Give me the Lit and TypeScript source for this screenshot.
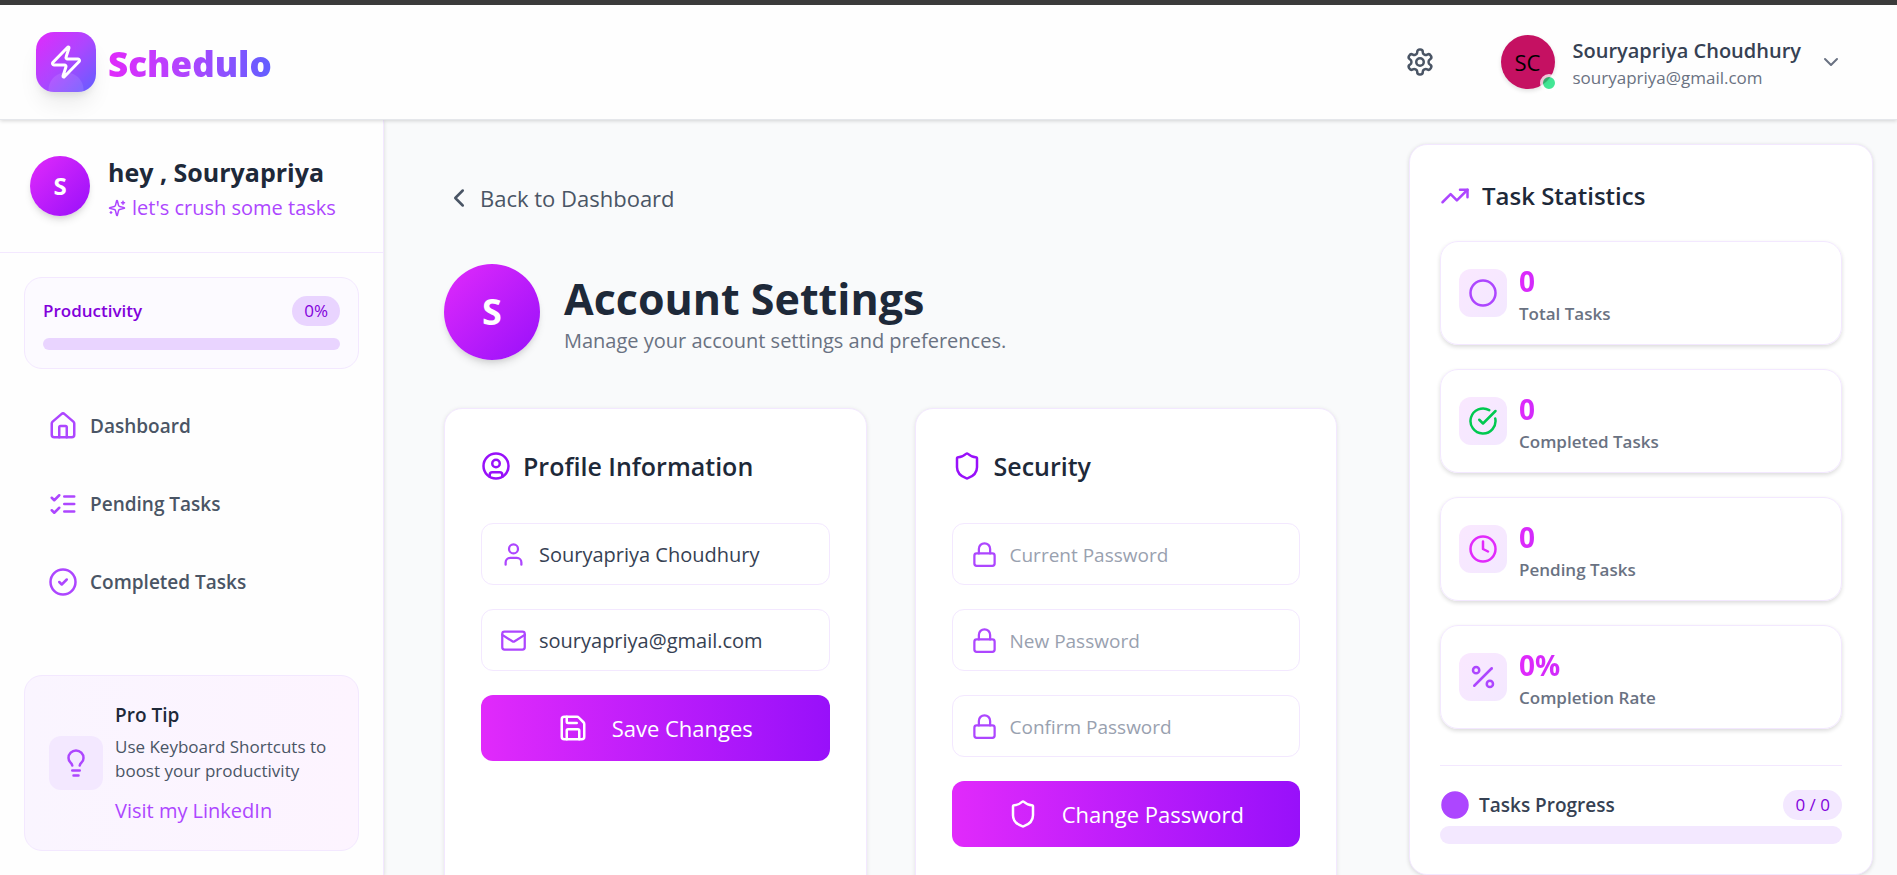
import { LitElement, html, css, svg, TemplateResult } from "lit";
import { customElement, property, state } from "lit/decorators.js";
import { styleMap } from "lit/directives/style-map.js";

const ICONS: Record<string, TemplateResult> = {
  zap: svg`<path d="M4 14a1 1 0 0 1-.78-1.63l9.9-10.2a.5.5 0 0 1 .86.46l-1.92 6.02A1 1 0 0 0 13 10h7a1 1 0 0 1 .78 1.63l-9.9 10.2a.5.5 0 0 1-.86-.46l1.92-6.02A1 1 0 0 0 11 14z"/>`,
  settings: svg`<path d="M12.22 2h-.44a2 2 0 0 0-2 2v.18a2 2 0 0 1-1 1.73l-.43.25a2 2 0 0 1-2 0l-.15-.08a2 2 0 0 0-2.73.73l-.22.38a2 2 0 0 0 .73 2.73l.15.1a2 2 0 0 1 1 1.72v.51a2 2 0 0 1-1 1.74l-.15.09a2 2 0 0 0-.73 2.73l.22.38a2 2 0 0 0 2.73.73l.15-.08a2 2 0 0 1 2 0l.43.25a2 2 0 0 1 1 1.73V20a2 2 0 0 0 2 2h.44a2 2 0 0 0 2-2v-.18a2 2 0 0 1 1-1.73l.43-.25a2 2 0 0 1 2 0l.15.08a2 2 0 0 0 2.73-.73l.22-.39a2 2 0 0 0-.73-2.73l-.15-.08a2 2 0 0 1-1-1.74v-.5a2 2 0 0 1 1-1.74l.15-.09a2 2 0 0 0 .73-2.73l-.22-.38a2 2 0 0 0-2.73-.73l-.15.08a2 2 0 0 1-2 0l-.43-.25a2 2 0 0 1-1-1.73V4a2 2 0 0 0-2-2z"/><circle cx="12" cy="12" r="3"/>`,
  chevronDown: svg`<path d="m6 9 6 6 6-6"/>`,
  chevronLeft: svg`<path d="m15 18-6-6 6-6"/>`,
  sparkles: svg`<path d="M9.937 15.5A2 2 0 0 0 8.5 14.063l-6.135-1.582a.5.5 0 0 1 0-.962L8.5 9.936A2 2 0 0 0 9.937 8.5l1.582-6.135a.5.5 0 0 1 .963 0L14.063 8.5A2 2 0 0 0 15.5 9.937l6.135 1.581a.5.5 0 0 1 0 .964L15.5 14.063a2 2 0 0 0-1.437 1.437l-1.582 6.135a.5.5 0 0 1-.963 0z"/><path d="M20 3v4M22 5h-4M4 17v2M5 18H3"/>`,
  house: svg`<path d="M15 21v-8a1 1 0 0 0-1-1h-4a1 1 0 0 0-1 1v8"/><path d="M3 10a2 2 0 0 1 .709-1.528l7-5.999a2 2 0 0 1 2.582 0l7 5.999A2 2 0 0 1 21 10v9a2 2 0 0 1-2 2H5a2 2 0 0 1-2-2z"/>`,
  listChecks: svg`<path d="m3 17 2 2 4-4M3 7l2 2 4-4M13 6h8M13 12h8M13 18h8"/>`,
  circleCheck: svg`<circle cx="12" cy="12" r="10"/><path d="m9 12 2 2 4-4"/>`,
  lightbulb: svg`<path d="M15 14c.2-1 .7-1.7 1.5-2.5 1-.9 1.5-2.2 1.5-3.5A6 6 0 0 0 6 8c0 1 .2 2.2 1.5 3.5.7.7 1.3 1.5 1.5 2.5M9 18h6M10 22h4"/>`,
  userRound: svg`<circle cx="12" cy="12" r="10"/><circle cx="12" cy="10" r="3"/><path d="M7 20.662V19a2 2 0 0 1 2-2h6a2 2 0 0 1 2 2v1.662"/>`,
  user: svg`<path d="M19 21v-2a4 4 0 0 0-4-4H9a4 4 0 0 0-4 4v2"/><circle cx="12" cy="7" r="4"/>`,
  mail: svg`<rect width="20" height="16" x="2" y="4" rx="2"/><path d="m22 7-8.97 5.7a1.94 1.94 0 0 1-2.06 0L2 7"/>`,
  save: svg`<path d="M15.2 3a2 2 0 0 1 1.4.6l3.8 3.8a2 2 0 0 1 .6 1.4V19a2 2 0 0 1-2 2H5a2 2 0 0 1-2-2V5a2 2 0 0 1 2-2z"/><path d="M17 21v-7a1 1 0 0 0-1-1H8a1 1 0 0 0-1 1v7M7 3v4a1 1 0 0 0 1 1h7"/>`,
  shield: svg`<path d="M20 13c0 5-3.5 7.5-7.66 8.95a1 1 0 0 1-.67-.01C7.5 20.5 4 18 4 13V6a1 1 0 0 1 1-1c2 0 4.5-1.2 6.24-2.72a1.17 1.17 0 0 1 1.52 0C14.51 3.81 17 5 19 5a1 1 0 0 1 1 1z"/>`,
  lock: svg`<rect width="18" height="11" x="3" y="11" rx="2"/><path d="M7 11V7a5 5 0 0 1 10 0v4"/>`,
  trendingUp: svg`<path d="m22 7-8.5 8.5-5-5L2 17"/><path d="M16 7h6v6"/>`,
  circle: svg`<circle cx="12" cy="12" r="10"/>`,
  circleCheckBig: svg`<path d="M21.801 10A10 10 0 1 1 17 3.335"/><path d="m9 11 3 3L22 4"/>`,
  clock: svg`<circle cx="12" cy="12" r="10"/><path d="M12 6v6l4 2"/>`,
  percent: svg`<path d="M19 5 5 19"/><circle cx="6.5" cy="6.5" r="2.5"/><circle cx="17.5" cy="17.5" r="2.5"/>`,
};

@customElement("line-icon")
class LineIcon extends LitElement {
  static styles = css`
    :host {
      display: block;
      flex: none;
      width: 30px;
      height: 30px;
    }
    svg {
      display: block;
      width: 100%;
      height: 100%;
      fill: none;
      stroke: currentColor;
      stroke-width: 2;
      stroke-linecap: round;
      stroke-linejoin: round;
    }
    :host([filled]) svg {
      fill: currentColor;
    }
  `;

  @property() name = "circle";

  render() {
    return html`<svg viewBox="0 0 24 24" aria-hidden="true">${ICONS[this.name]}</svg>`;
  }
}

@customElement("app-root")
class AppRoot extends LitElement {
  static styles = css`
    :host {
      display: flex;
      flex-direction: column;
      height: 100vh;
      overflow: hidden;
      border-top: 5px solid #3b3b3b;
      box-sizing: border-box;
      background: #f9fafb;
      color: #1e2939;
      font-family: "Open Sans", "Noto Sans", sans-serif;
      font-size: 20px;
      line-height: 30px;
    }
    *,
    *::before,
    *::after {
      box-sizing: border-box;
    }
    h1,
    h2,
    h3,
    p {
      margin: 0;
    }
    button,
    input {
      font: inherit;
      color: inherit;
      border: 0;
      background: none;
      padding: 0;
      margin: 0;
    }
    button {
      cursor: pointer;
    }
    a {
      color: inherit;
      text-decoration: none;
    }

    /* header */
    .header {
      position: relative;
      z-index: 2;
      flex: none;
      display: flex;
      align-items: center;
      justify-content: space-between;
      height: 115px;
      padding: 0 36px;
      background: #fefefe;
      border-bottom: 1px solid #e5e7eb;
      box-shadow: 0 1px 4px rgba(0, 0, 0, 0.16);
    }
    .brand {
      display: flex;
      align-items: center;
      gap: 12px;
    }
    .logo {
      display: grid;
      place-items: center;
      position: relative;
      width: 60px;
      height: 60px;
      border-radius: 18px;
      color: #fff;
      background: linear-gradient(135deg, #e12afb, #ad46ff 50%, #615fff);
      box-shadow: 0 15px 22px -4px rgba(0, 0, 0, 0.08), 0 6px 9px -4px rgba(0, 0, 0, 0.1);
    }
    .logo::after {
      content: "";
      position: absolute;
      inset: 0;
      border-radius: 18px;
      background: radial-gradient(circle 18px at 50% 58px, rgba(255, 255, 255, 0.1) 17px, transparent 18px);
    }
    .logo line-icon {
      width: 36px;
      height: 36px;
    }
    .wordmark {
      padding-top: 3px;
      font-size: 35px;
      line-height: 48px;
      font-weight: 800;
      color: transparent;
      background: linear-gradient(90deg, #e12afb, #ad46ff 50%, #615fff);
      -webkit-background-clip: text;
      background-clip: text;
    }
    .header-actions {
      display: flex;
      align-items: center;
      gap: 36px;
    }
    .gear {
      padding: 12px;
      color: #4a5565;
    }
    .account {
      display: flex;
      align-items: center;
      gap: 18px;
      padding: 0 18px;
      text-align: left;
      color: #6a7282;
    }
    .account line-icon {
      width: 24px;
      height: 24px;
    }
    .account-text {
      display: block;
    }
    .account-name {
      display: block;
      line-height: 32px;
      font-weight: 600;
      color: #364153;
    }
    .account-mail {
      display: block;
      font-size: 17px;
      line-height: 22px;
    }
    .initials {
      position: relative;
      display: grid;
      place-items: center;
      width: 54px;
      height: 54px;
      border-radius: 50%;
      background: #c51162;
      color: #000;
      font-size: 22px;
      box-shadow: 0 2px 4px rgba(0, 0, 0, 0.12);
    }
    .presence {
      position: absolute;
      right: -3px;
      bottom: -3px;
      width: 18px;
      height: 18px;
      border: 3px solid #fff;
      border-radius: 50%;
      background: #05df72;
      opacity: 0.75;
    }

    /* shell */
    .shell {
      flex: 1;
      min-height: 0;
      display: flex;
    }
    .sidebar {
      position: relative;
      z-index: 1;
      flex: none;
      width: 384px;
      display: flex;
      flex-direction: column;
      background: #fefefe;
      border-right: 1px solid #f3e8ff;
      box-shadow: 0 1px 4px rgba(0, 0, 0, 0.14);
    }
    .disc {
      flex: none;
      display: grid;
      place-items: center;
      border-radius: 50%;
      background: linear-gradient(135deg, #e12afb, #9810fa);
      color: #fff;
      font-weight: 700;
      box-shadow: 0 6px 9px -2px rgba(0, 0, 0, 0.12), 0 3px 6px -3px rgba(0, 0, 0, 0.12);
    }
    .disc-small {
      width: 60px;
      height: 60px;
      font-size: 24px;
    }
    .disc-large {
      width: 96px;
      height: 96px;
      font-size: 36px;
    }
    .greeting {
      display: flex;
      align-items: flex-start;
      gap: 18px;
      padding: 36px 30px 24px;
      border-bottom: 1px solid #f3e8ff;
    }
    .greeting-title {
      font-size: 25px;
      line-height: 32px;
      font-weight: 700;
    }
    .greeting-sub {
      display: flex;
      align-items: center;
      gap: 6px;
      line-height: 40px;
      font-weight: 500;
      color: #ad46ff;
    }
    .greeting-sub line-icon {
      width: 18px;
      height: 18px;
    }
    .side-body {
      flex: 1;
      display: flex;
      flex-direction: column;
      padding: 24px;
    }
    .productivity {
      padding: 18px;
      border: 1px solid #f3e8ff;
      border-radius: 18px;
      background: #fcfaff;
    }
    .row {
      display: flex;
      align-items: center;
      justify-content: space-between;
    }
    .productivity .row {
      font-size: 17px;
      font-weight: 600;
      color: #8200db;
      margin-bottom: 12px;
    }
    .badge {
      padding: 0 12px;
      border-radius: 15px;
      font-size: 17px;
      font-weight: 400;
      color: #8200db;
      background: #e9d4ff;
    }
    .badge-light {
      background: #f3e8ff;
    }
    .track {
      height: 12px;
      border-radius: 6px;
      overflow: hidden;
      background: #e9d4ff;
    }
    .track-tall {
      height: 18px;
      border-radius: 9px;
      background: #f3e8ff;
    }
    .fill {
      height: 100%;
      background: linear-gradient(90deg, #e12afb, #9810fa);
    }
    .nav {
      display: flex;
      flex-direction: column;
      gap: 24px;
      margin-top: 30px;
    }
    .nav-link {
      display: flex;
      align-items: center;
      gap: 12px;
      padding: 12px 24px;
      font-size: 19px;
      font-weight: 600;
      color: #4a5565;
    }
    .nav-link line-icon {
      color: #ad46ff;
    }
    .tip {
      display: flex;
      align-items: center;
      gap: 12px;
      margin-top: auto;
      padding: 23px 24px;
      border: 1px solid #f3e8ff;
      border-radius: 18px;
      background: linear-gradient(90deg, #faf5ff, #fdf4ff);
    }
    .tip-icon {
      padding: 12px;
      border-radius: 12px;
      background: #f3e8ff;
      color: #ad46ff;
    }
    .tip-title {
      font-size: 19px;
      line-height: 32px;
      font-weight: 600;
    }
    .tip-text {
      margin: 4px 0 12px;
      font-size: 17px;
      line-height: 24px;
      color: #4a5565;
    }
    .tip-link {
      display: block;
      line-height: 32px;
      color: #ad46ff;
    }

    /* content */
    .content {
      flex: 1;
      min-width: 0;
      display: flex;
      align-items: flex-start;
      overflow-y: auto;
      scrollbar-width: none;
    }
    .main {
      flex: 1;
      min-width: 0;
      padding: 60px 72px 60px 60px;
    }
    .back {
      display: flex;
      align-items: center;
      gap: 6px;
      margin-bottom: 48px;
      font-size: 22px;
      line-height: 36px;
      color: #4a5565;
    }
    .page-head {
      display: flex;
      align-items: center;
      gap: 24px;
      margin-bottom: 48px;
    }
    .page-head-text {
      padding-top: 4px;
    }
    .page-title {
      font-size: 43px;
      line-height: 54px;
      font-weight: 700;
    }
    .page-sub {
      color: #6a7282;
    }
    .panels {
      display: grid;
      grid-template-columns: repeat(2, minmax(0, 1fr));
      gap: 48px;
    }
    .panel {
      padding: 36px 36px 60px;
      border: 1px solid #f3e8ff;
      border-radius: 18px;
      background: #fff;
      box-shadow: 0 1px 4px rgba(0, 0, 0, 0.1);
    }
    .panel-title {
      display: flex;
      align-items: center;
      gap: 12px;
      margin-bottom: 36px;
      font-size: 25px;
      line-height: 42px;
      font-weight: 600;
    }
    .panel-title line-icon {
      color: #9810fa;
    }
    .fields {
      display: flex;
      flex-direction: column;
      gap: 24px;
    }
    .field {
      display: flex;
      align-items: center;
      gap: 12px;
      padding: 15px 18px;
      border: 1px solid #f3e8ff;
      border-radius: 12px;
      color: #364153;
    }
    .field line-icon {
      width: 27px;
      height: 27px;
      color: #ad46ff;
    }
    .field input {
      flex: 1;
      min-width: 0;
      height: 30px;
      padding-top: 2px;
      outline: none;
    }
    .field input::placeholder {
      font-size: 19px;
      color: #99a1af;
      opacity: 1;
    }
    .submit {
      display: flex;
      align-items: center;
      justify-content: center;
      gap: 24px;
      padding: 15px 24px;
      border-radius: 12px;
      font-size: 22px;
      line-height: 36px;
      color: #fff;
      background: linear-gradient(90deg, #e12afb, #9810fa);
    }

    /* statistics */
    .stats {
      flex: none;
      width: 464px;
      margin: 24px 24px 24px 0;
      padding: 30px;
      border: 1px solid #f3e8ff;
      border-radius: 18px;
      background: #fff;
      box-shadow: 0 1px 4px rgba(0, 0, 0, 0.14);
    }
    .stats-title {
      display: flex;
      align-items: center;
      gap: 12px;
      margin-bottom: 24px;
      font-size: 24px;
      line-height: 42px;
      font-weight: 600;
    }
    .stats-title line-icon {
      color: #ad46ff;
    }
    .stat-list {
      display: flex;
      flex-direction: column;
      gap: 24px;
    }
    .stat {
      display: flex;
      align-items: center;
      gap: 12px;
      padding: 18px;
      border: 1px solid #f3e8ff;
      border-radius: 18px;
      box-shadow: 0 2px 4px rgba(0, 0, 0, 0.14);
    }
    .stat-icon {
      padding: 9px;
      border-radius: 12px;
      background: linear-gradient(135deg, #fae8ff, #f3e8ff);
    }
    .violet {
      color: #ad46ff;
    }
    .green {
      color: #00c950;
    }
    .pink {
      color: #e12afb;
    }
    .stat-value {
      font-size: 28px;
      line-height: 42px;
      font-weight: 700;
      width: fit-content;
      color: transparent;
      background: linear-gradient(90deg, #e12afb, #d02afb);
      -webkit-background-clip: text;
      background-clip: text;
    }
    .stat-label {
      font-size: 17px;
      line-height: 24px;
      font-weight: 600;
      color: #6a7282;
    }
    .progress {
      margin-top: 36px;
      padding-top: 24px;
      border-top: 1px solid #f3e8ff;
    }
    .progress .row {
      margin-bottom: 6px;
    }
    .progress-label {
      display: flex;
      align-items: center;
      gap: 9px;
      font-size: 19px;
      font-weight: 600;
      color: #364153;
    }
    .progress-label line-icon {
      color: #ad46ff;
    }
  `;

  @state() private total = 0;
  @state() private completed = 0;

  private get rate() {
    return this.total ? Math.round((this.completed / this.total) * 100) : 0;
  }

  private nav = [
    { icon: "house", label: "Dashboard" },
    { icon: "listChecks", label: "Pending Tasks" },
    { icon: "circleCheck", label: "Completed Tasks" },
  ];

  private header() {
    return html`
      <header class="header">
        <a class="brand" href="#">
          <span class="logo"><line-icon name="zap"></line-icon></span>
          <span class="wordmark">Schedulo</span>
        </a>
        <div class="header-actions">
          <button class="gear" type="button" aria-label="Settings">
            <line-icon name="settings"></line-icon>
          </button>
          <button class="account" type="button">
            <span class="initials">SC<span class="presence"></span></span>
            <span class="account-text">
              <span class="account-name">Souryapriya Choudhury</span>
              <span class="account-mail">souryapriya@gmail.com</span>
            </span>
            <line-icon name="chevronDown"></line-icon>
          </button>
        </div>
      </header>
    `;
  }

  private sidebar() {
    return html`
      <aside class="sidebar">
        <div class="greeting">
          <div class="disc disc-small">S</div>
          <div>
            <h2 class="greeting-title">hey , Souryapriya</h2>
            <p class="greeting-sub">
              <line-icon name="sparkles"></line-icon>let's crush some tasks
            </p>
          </div>
        </div>
        <div class="side-body">
          <section class="productivity">
            <div class="row">
              <span>Productivity</span><span class="badge">${this.rate}%</span>
            </div>
            <div class="track"><div class="fill" style=${styleMap({ width: `${this.rate}%` })}></div></div>
          </section>
          <nav class="nav">
            ${this.nav.map(
              (n) => html`<a class="nav-link" href="#"><line-icon name=${n.icon}></line-icon>${n.label}</a>`
            )}
          </nav>
          <section class="tip">
            <div class="tip-icon"><line-icon name="lightbulb"></line-icon></div>
            <div>
              <h3 class="tip-title">Pro Tip</h3>
              <p class="tip-text">Use Keyboard Shortcuts to boost your productivity</p>
              <a class="tip-link" href="#">Visit my LinkedIn</a>
            </div>
          </section>
        </div>
      </aside>
    `;
  }

  private field(icon: string, label: string, type: string, value = "") {
    return html`
      <label class="field">
        <line-icon name=${icon}></line-icon>
        <input type=${type} aria-label=${label} placeholder=${label} .value=${value} />
      </label>
    `;
  }

  private stat(icon: string, tone: string, value: string, label: string) {
    return html`
      <div class="stat">
        <div class="stat-icon ${tone}"><line-icon name=${icon}></line-icon></div>
        <div>
          <p class="stat-value">${value}</p>
          <p class="stat-label">${label}</p>
        </div>
      </div>
    `;
  }

  private statistics() {
    return html`
      <aside class="stats">
        <h2 class="stats-title"><line-icon name="trendingUp"></line-icon>Task Statistics</h2>
        <div class="stat-list">
          ${this.stat("circle", "violet", `${this.total}`, "Total Tasks")}
          ${this.stat("circleCheckBig", "green", `${this.completed}`, "Completed Tasks")}
          ${this.stat("clock", "pink", `${this.total - this.completed}`, "Pending Tasks")}
          ${this.stat("percent", "violet", `${this.rate}%`, "Completion Rate")}
        </div>
        <div class="progress">
          <div class="row">
            <span class="progress-label"><line-icon filled name="circle"></line-icon>Tasks Progress</span>
            <span class="badge badge-light">${this.completed} / ${this.total}</span>
          </div>
          <div class="track track-tall">
            <div class="fill" style=${styleMap({ width: `${this.rate}%` })}></div>
          </div>
        </div>
      </aside>
    `;
  }

  render() {
    return html`
      ${this.header()}
      <div class="shell">
        ${this.sidebar()}
        <div class="content">
          <main class="main">
            <a class="back" href="#"><line-icon name="chevronLeft"></line-icon>Back to Dashboard</a>
            <div class="page-head">
              <div class="disc disc-large">S</div>
              <div class="page-head-text">
                <h1 class="page-title">Account Settings</h1>
                <p class="page-sub">Manage your account settings and preferences.</p>
              </div>
            </div>
            <div class="panels">
              <section class="panel">
                <h2 class="panel-title"><line-icon name="userRound"></line-icon>Profile Information</h2>
                <form class="fields">
                  ${this.field("user", "Name", "text", "Souryapriya Choudhury")}
                  ${this.field("mail", "Email", "email", "souryapriya@gmail.com")}
                  <button class="submit" type="button"><line-icon name="save"></line-icon>Save Changes</button>
                </form>
              </section>
              <section class="panel">
                <h2 class="panel-title"><line-icon name="shield"></line-icon>Security</h2>
                <form class="fields">
                  ${this.field("lock", "Current Password", "password")}
                  ${this.field("lock", "New Password", "password")}
                  ${this.field("lock", "Confirm Password", "password")}
                  <button class="submit" type="button"><line-icon name="shield"></line-icon>Change Password</button>
                </form>
              </section>
            </div>
          </main>
          ${this.statistics()}
        </div>
      </div>
    `;
  }
}
